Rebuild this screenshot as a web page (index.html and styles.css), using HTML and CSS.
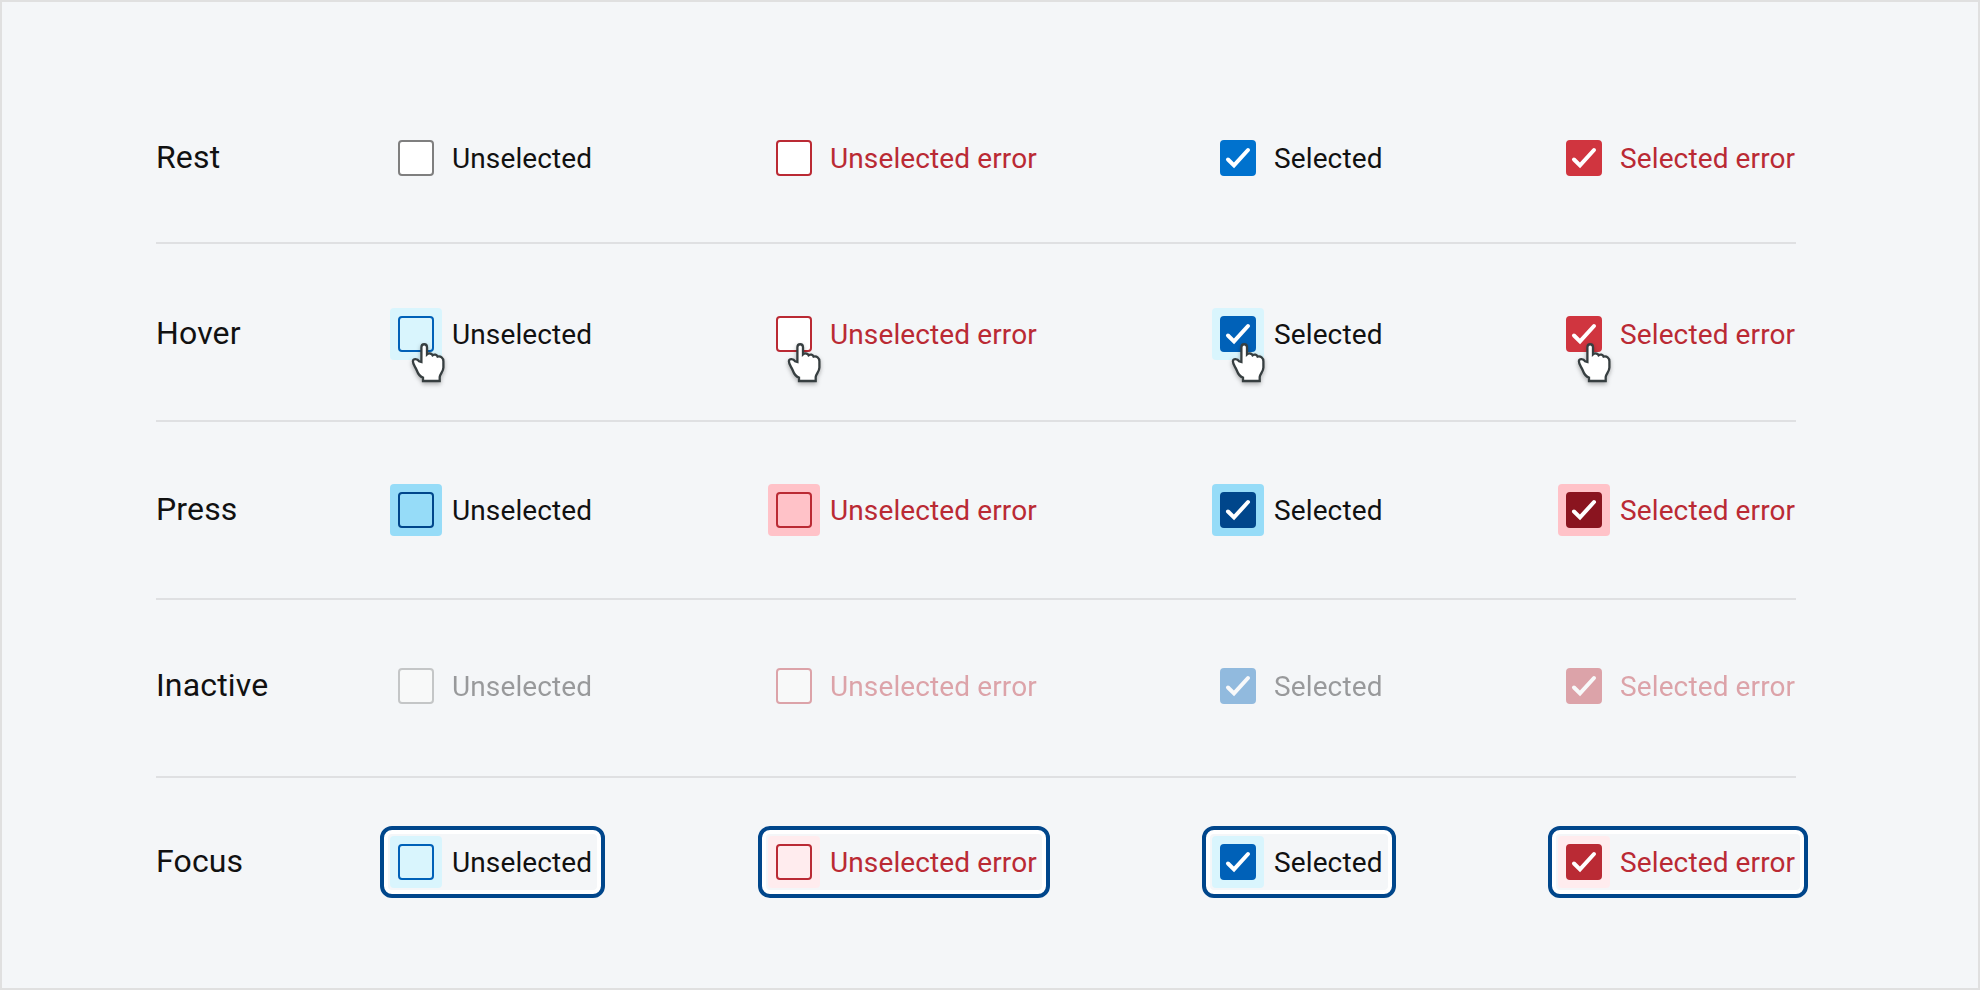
FILE: index.html
```
<!DOCTYPE html>
<html lang="en">
<head>
<meta charset="utf-8">
<title>Checkbox states</title>
<link rel="stylesheet" href="styles.css">
</head>
<body>
<svg width="0" height="0" class="defs" aria-hidden="true">
  <symbol id="check" viewBox="0 0 36 36"><path d="M8 19.5 14 25.4 28 10" fill="none" stroke="#fff" stroke-width="4" stroke-linecap="round"/></symbol>
  <symbol id="hand" viewBox="0 0 44 50"><path d="M15.4 24V9.3C15.4 5.2 21 5.2 21 9.3V16.4C22.5 15 25.6 15.1 26.6 17.2C28.4 16 30.8 16.5 31.6 18.6C34.6 17.8 37.4 19.8 37.4 23.2V29.5C37.4 33.5 34.3 35.5 33.7 39V43H17V39.6C13.8 38.6 11.8 35.3 10.6 32C9.3 28.8 6.9 26.6 6.9 23.3C6.9 20.2 11.5 20.5 13.2 23.3Z" fill="#fff" stroke="#373f41" stroke-width="2.3"/></symbol>
</svg>
<main class="sheet">
  <section class="row rest">
    <h2>Rest</h2>
    <div class="option"><span class="box"></span><span class="label">Unselected</span></div>
    <div class="option error"><span class="box"></span><span class="label">Unselected error</span></div>
    <div class="option on"><span class="box"><svg class="check"><use href="#check"/></svg></span><span class="label">Selected</span></div>
    <div class="option error on"><span class="box"><svg class="check"><use href="#check"/></svg></span><span class="label">Selected error</span></div>
  </section>
  <section class="row hover">
    <h2>Hover</h2>
    <div class="option"><span class="box"><svg class="hand"><use href="#hand"/></svg></span><span class="label">Unselected</span></div>
    <div class="option error"><span class="box"><svg class="hand"><use href="#hand"/></svg></span><span class="label">Unselected error</span></div>
    <div class="option on"><span class="box"><svg class="check"><use href="#check"/></svg><svg class="hand"><use href="#hand"/></svg></span><span class="label">Selected</span></div>
    <div class="option error on"><span class="box"><svg class="check"><use href="#check"/></svg><svg class="hand"><use href="#hand"/></svg></span><span class="label">Selected error</span></div>
  </section>
  <section class="row press">
    <h2>Press</h2>
    <div class="option"><span class="box"></span><span class="label">Unselected</span></div>
    <div class="option error"><span class="box"></span><span class="label">Unselected error</span></div>
    <div class="option on"><span class="box"><svg class="check"><use href="#check"/></svg></span><span class="label">Selected</span></div>
    <div class="option error on"><span class="box"><svg class="check"><use href="#check"/></svg></span><span class="label">Selected error</span></div>
  </section>
  <section class="row inactive">
    <h2>Inactive</h2>
    <div class="option"><span class="box"></span><span class="label">Unselected</span></div>
    <div class="option error"><span class="box"></span><span class="label">Unselected error</span></div>
    <div class="option on"><span class="box"><svg class="check"><use href="#check"/></svg></span><span class="label">Selected</span></div>
    <div class="option error on"><span class="box"><svg class="check"><use href="#check"/></svg></span><span class="label">Selected error</span></div>
  </section>
  <section class="row focus">
    <h2>Focus</h2>
    <div class="option"><span class="box"></span><span class="label">Unselected</span></div>
    <div class="option error"><span class="box"></span><span class="label">Unselected error</span></div>
    <div class="option on"><span class="box"><svg class="check"><use href="#check"/></svg></span><span class="label">Selected</span></div>
    <div class="option error on"><span class="box"><svg class="check"><use href="#check"/></svg></span><span class="label">Selected error</span></div>
  </section>
</main>
</body>
</html>
```
FILE: styles.css
```
* { box-sizing: border-box; }
body { margin: 0; font-family: Roboto, sans-serif; color: #111; }
.defs { display: block; height: 0; }
.sheet {
  position: relative;
  z-index: 0;
  width: 1980px;
  height: 990px;
  padding: 138px 182px 0 154px;
  border: 2px solid #e0e0e0;
  background: #f4f6f8;
}
.row {
  display: grid;
  grid-template-columns: 242px 378px 444px 346px 1fr;
  border-bottom: 2px solid #dfe0e2;
}
.rest { height: 104px; }
.hover { height: 178px; padding-top: 72px; }
.press { height: 178px; padding-top: 70px; }
.inactive { height: 178px; padding-top: 68px; }
.focus { padding-top: 66px; border: 0; }

h2 { margin: 0; font-size: 32px; font-weight: 400; line-height: 34px; letter-spacing: 0.15px; }
.option {
  --line: #7f7f7f;
  --fill: #fff;
  --halo: transparent;
  display: flex;
  gap: 18px;
  height: 36px;
  justify-self: start;
  white-space: nowrap;
}
.label { font-size: 28px; line-height: 38px; letter-spacing: 0.12px; }
.box {
  position: relative;
  width: 36px;
  height: 36px;
  border: 2px solid var(--line);
  border-radius: 4px;
  background: var(--fill);
}
.box::before {
  content: "";
  position: absolute;
  z-index: -1;
  inset: -10px;
  border-radius: 4px;
  background: var(--halo);
}
.check { position: absolute; left: -2px; top: -2px; width: 36px; height: 36px; }
.hand {
  position: absolute;
  left: 6px;
  top: 20px;
  width: 44px;
  height: 50px;
  filter: drop-shadow(0 2px 2px rgba(0, 0, 0, 0.3));
}
.error .hand, .on .hand { left: 4px; }

.error { --line: #ba2a34; color: #ba2a34; }
.on { --line: #0072ce; --fill: #0072ce; }
.error.on { --line: #d0353f; --fill: #d0353f; }

.hover .option:not(.error) { --line: #0061b8; --fill: #d9f5fd; --halo: #d9f5fd; }
.hover .on:not(.error) { --fill: #0061b8; }

.press .option { --line: #00468b; --fill: #96dcf8; --halo: #96dcf8; }
.press .error { --line: #ba2a34; --fill: #ffc2c8; --halo: #ffc2c8; }
.press .on { --fill: #00468b; }
.press .error.on { --line: #8a141f; --fill: #8a141f; }

.inactive .option { --fill: #fffffb; opacity: 0.4; }
.inactive .on { --line: #0061b8; --fill: #0061b8; }
.inactive .error.on { --line: #ba2a34; --fill: #ba2a34; }

.focus .option {
  --line: #0061b8;
  --fill: #d9f5fd;
  --halo: #d9f5fd;
  height: 72px;
  margin: -18px;
  padding: 14px;
  padding-right: 9px;
  border: 4px solid #00468b;
  border-radius: 12px;
  box-shadow: inset 0 0 0 4px #fff;
}
.focus .error { --line: #ba2a34; --fill: #ffecee; --halo: #ffecee; }
.focus .on { --fill: #0061b8; }
.focus .error.on { --fill: #ba2a34; }
```
